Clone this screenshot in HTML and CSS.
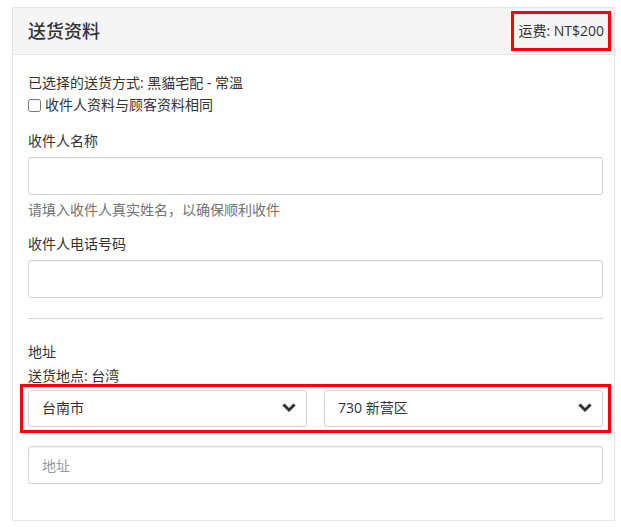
FILE: index.html
```html
<!DOCTYPE html>
<html>
<head>
    <meta charset="UTF-8">
    <link rel="stylesheet" href="styles.css">
</head>
<body>
    <div class="panel">
        <div class="panel-heading">
            <h3 class="panel-title">送货资料</h3>
            <div class="highlight shipping-fee">运费: NT$200</div>
        </div>

        <div class="panel-body">
            <div class="delivery-method">已选择的送货方式: 黑貓宅配 - 常溫</div>
            <label class="checkbox-line">
                <input type="checkbox" id="sameAsCustomer">
                <span>收件人资料与顾客资料相同</span>
            </label>

            <div class="form-group">
                <label class="control-label" for="recipientName">收件人名称</label>
                <input type="text" id="recipientName" class="form-control">
                <div class="help-block">请填入收件人真实姓名，以确保顺利收件</div>
            </div>

            <div class="form-group">
                <label class="control-label" for="recipientPhone">收件人电话号码</label>
                <input type="text" id="recipientPhone" class="form-control">
            </div>

            <hr class="divider">

            <div class="address-group">
                <div class="control-label">地址</div>
                <div class="delivery-country">送货地点: 台湾</div>
                <div class="highlight address-selects">
                    <div class="select-box">
                        <span>台南市</span>
                        <svg class="chevron" viewBox="0 0 14 10">
                            <path d="M2.5 2.5l4.5 4.5 4.5-4.5"/>
                        </svg>
                    </div>
                    <div class="select-box">
                        <span>730 新营区</span>
                        <svg class="chevron" viewBox="0 0 14 10">
                            <path d="M2.5 2.5l4.5 4.5 4.5-4.5"/>
                        </svg>
                    </div>
                </div>
                <input type="text" class="form-control address-input" placeholder="地址">
            </div>
        </div>
    </div>
</body>
</html>
```

FILE: styles.css
```css
* {
    box-sizing: border-box;
}

body {
    margin: 0;
    padding: 7px 6px 0 12px;
    font-family: "Open Sans", "Noto Sans CJK SC", sans-serif;
    font-size: 14px;
    line-height: 22px;
    color: #333;
    background: #ffffff;
}

.panel {
    width: 603px;
    border: 1px solid #e6e6e6;
    background: #ffffff;
}

.panel-heading {
    height: 47px;
    display: flex;
    align-items: center;
    justify-content: space-between;
    padding: 0 3px 0 15px;
    background: #f5f5f5;
    border-bottom: 1px solid #e6e6e6;
}

.panel-title {
    margin: 0;
    font-size: 18px;
    font-weight: 500;
    color: #333;
}

.highlight {
    border: 3px solid #ff0000;
}

.shipping-fee {
    height: 40px;
    display: flex;
    align-items: center;
    padding: 0 4px;
    font-size: 14px;
}

.panel-body {
    padding: 17px 11px 36px 15px;
}

.checkbox-line {
    display: flex;
    align-items: center;
    gap: 4px;
}

.checkbox-line input {
    margin: 0;
    width: 13px;
    height: 13px;
}

.form-group {
    margin-top: 14px;
}

.form-group + .form-group {
    margin-top: 12px;
}

.control-label {
    display: block;
    margin-bottom: 5px;
}

.form-control {
    display: block;
    width: 100%;
    height: 38px;
    padding: 6px 13px;
    font-family: inherit;
    font-size: 14px;
    color: #333;
    background: #ffffff;
    border: 1px solid #d2d2d2;
    border-radius: 3px;
    box-shadow: inset 0 1px 1px rgba(0, 0, 0, 0.04);
}

.form-control::placeholder {
    color: #9a9a9a;
}

.help-block {
    margin-top: 4px;
    color: #737373;
}

.divider {
    margin: 20px 0 22px;
    border: none;
    border-top: 1px solid #d6d6d6;
}

.address-group .control-label {
    margin-bottom: 2px;
}

.address-selects {
    display: grid;
    grid-template-columns: 1fr 1fr;
    gap: 17px;
    margin: -3px -8px 0;
    padding: 3px 5px;
}

.select-box {
    height: 37px;
    display: flex;
    align-items: center;
    justify-content: space-between;
    padding: 0 10px 1px 13px;
    border: 1px solid #d2d2d2;
    border-radius: 3px;
    background: #ffffff;
}

.chevron {
    width: 14px;
    height: 10px;
    fill: none;
    stroke: #333;
    stroke-width: 3;
    stroke-linecap: square;
}

.address-input {
    margin-top: 13px;
}
```
